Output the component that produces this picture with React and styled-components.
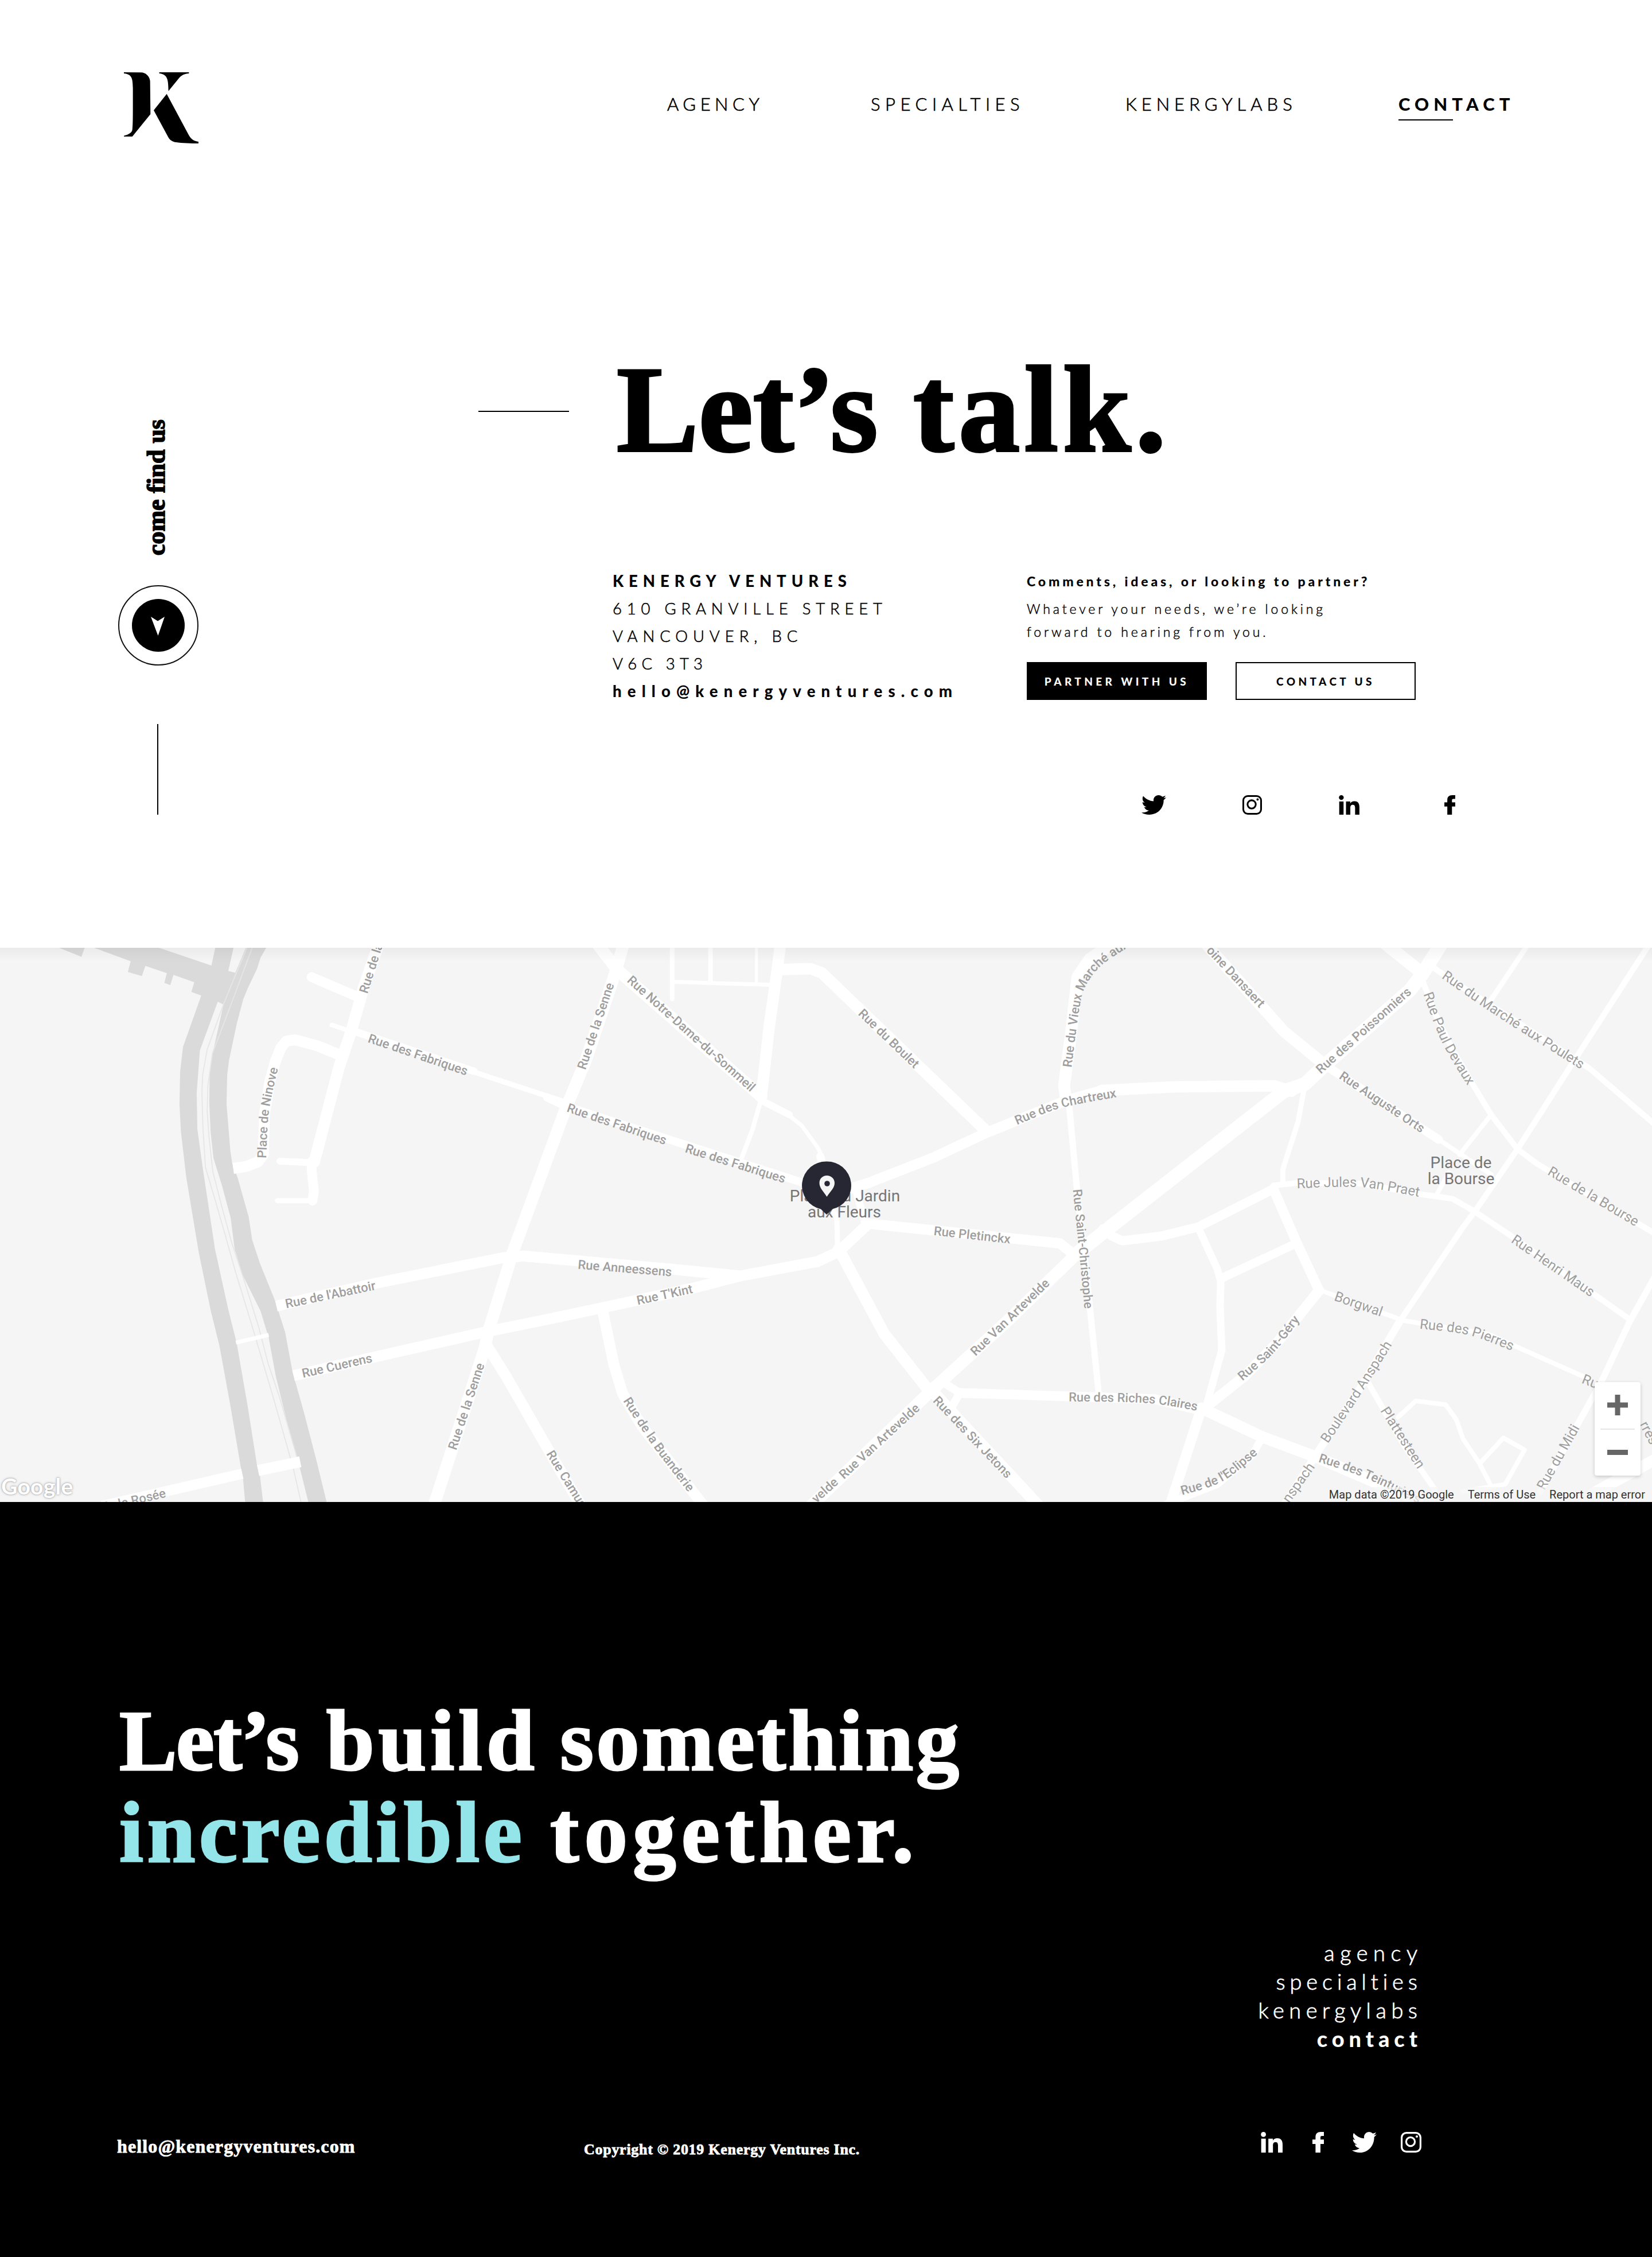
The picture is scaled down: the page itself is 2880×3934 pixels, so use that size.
import React from "react";
import styled, { createGlobalStyle } from "styled-components";
import { FaTwitter } from "react-icons/fa";

const SERIF = `"Liberation Serif", "Times New Roman", serif`;
const SANS = `Lato, "Open Sans", sans-serif`;
const MAP_FONT = `Roboto, "Liberation Sans", sans-serif`;

const GlobalStyle = createGlobalStyle`
  * { box-sizing: border-box; }
  body { margin: 0; background: #fff; color: #000; font-family: ${SANS}; }
  h1, h2, p { margin: 0; }
  a { color: inherit; text-decoration: none; }
`;

const Page = styled.div`
  width: 2880px;
  display: flex;
  flex-direction: column;
`;

/* ---------- header ---------- */

const Header = styled.header`
  height: 300px;
  padding: 126px 0 0 216px;
  display: flex;
  align-items: flex-start;
`;

const Logo = styled.svg`
  width: 130px;
  height: 124px;
  flex: none;
`;

const Nav = styled.nav`
  margin: 37px 0 0 817px;
  display: grid;
  grid-template-columns: 355px 444px 476px auto;
`;

const NavLink = styled.a`
  font-size: 31px;
  line-height: 36px;
  font-weight: ${(p) => (p.$active ? 900 : 300)};
  letter-spacing: ${(p) => p.$track}px;
  -webkit-text-stroke: ${(p) => (p.$active ? 0 : 0.7)}px currentColor;
  ${(p) =>
    p.$active &&
    `&::after {
      content: "";
      display: block;
      width: 95px;
      height: 2px;
      margin-top: 9px;
      background: #000;
    }`}
`;

/* ---------- hero ---------- */

const Hero = styled.main`
  height: 1352px;
  padding-left: 206px;
  display: flex;
  align-items: flex-start;
`;

const Side = styled.aside`
  width: 140px;
  padding-top: 431px;
  display: flex;
  flex-direction: column;
  align-items: center;
`;

const SideText = styled.span`
  margin-right: 6px;
  writing-mode: vertical-rl;
  transform: rotate(180deg);
  font: 700 44px/44px ${SERIF};
  -webkit-text-stroke: 1.6px #000;
`;

const Ring = styled.div`
  width: 140px;
  height: 140px;
  margin-top: 52px;
  border: 2px solid #111;
  border-radius: 50%;
  display: grid;
  place-items: center;
`;

const Disc = styled.div`
  width: 92px;
  height: 92px;
  border-radius: 50%;
  background: #000;
  display: grid;
  place-items: center;
`;

const Arrow = styled.svg`
  width: 24px;
  height: 33px;
  margin: 3px 2px 0 0;
`;

const SideLine = styled.div`
  width: 2px;
  height: 158px;
  margin: 102px 2px 0 0;
  background: #000;
`;

const Content = styled.section`
  margin-left: 488px;
  padding-top: 307px;
`;

const TitleRow = styled.div`
  display: flex;
  align-items: flex-start;
  gap: 83px;
`;

const Dash = styled.div`
  width: 158px;
  height: 2px;
  margin-top: 109px;
  background: #000;
`;

const Title = styled.h1`
  font: 700 214px/214px ${SERIF};
  -webkit-text-stroke: 4px #000;
  white-space: nowrap;
`;

const Word = styled.span`
  letter-spacing: ${(p) => p.$track}px;
  margin-right: ${(p) => p.$gap || 0}px;
  color: ${(p) => p.$color || "inherit"};
`;

const Info = styled.div`
  margin: 166px 0 0 234px;
  display: flex;
`;

const Address = styled.address`
  width: 722px;
  padding-top: 2px;
  font-style: normal;
  font-size: 27.5px;
  line-height: 48px;
  white-space: nowrap;
`;

const AddressLine = styled.div`
  font-weight: ${(p) => (p.$bold ? 900 : 300)};
  letter-spacing: ${(p) => p.$track}px;
  -webkit-text-stroke: ${(p) => (p.$bold ? 0 : 0.6)}px currentColor;
`;

const Pitch = styled.div`
  padding-top: 12px;
  font-size: 23px;
  white-space: nowrap;
`;

const PitchTitle = styled.p`
  line-height: 28px;
  font-weight: 900;
  letter-spacing: 4.85px;
`;

const PitchText = styled.p`
  margin-top: 14px;
  line-height: 40px;
  font-weight: 300;
  letter-spacing: 4.9px;
  -webkit-text-stroke: 0.5px currentColor;
`;

const Buttons = styled.div`
  margin-top: 33px;
  display: flex;
  gap: 50px;
`;

const Button = styled.button`
  width: 314px;
  height: 66px;
  padding: 1px 0 0;
  border: 2px solid #000;
  background: ${(p) => (p.$solid ? "#000" : "#fff")};
  color: ${(p) => (p.$solid ? "#fff" : "#000")};
  font: 900 19px/22px ${SANS};
  letter-spacing: 5.4px;
`;

const Socials = styled.div`
  display: grid;
  align-items: center;
  ${(p) =>
    p.$footer
      ? "height: 36px; grid-template-columns: 90px 69px 85px auto;"
      : "height: 34px; margin: 157px 0 0 1156px; grid-template-columns: 176px 168px 184px auto;"}
`;

const Twitter = styled(FaTwitter)`
  display: block;
  width: ${(p) => p.$w}px;
  height: ${(p) => p.$h}px;
`;

const Glyph = styled.svg`
  display: block;
  width: ${(p) => p.$w}px;
  height: ${(p) => p.$h}px;
`;

/* ---------- map ---------- */

const MapSection = styled.section`
  position: relative;
  height: 966px;
  background: #f5f5f5;
  overflow: hidden;
`;

const MapCanvas = styled.svg`
  display: block;
  width: 2880px;
  height: 966px;
`;

const Road = styled.path`
  fill: none;
  stroke: #fff;
  stroke-linejoin: round;
  stroke-linecap: ${(p) => (p.$flat ? "butt" : "round")};
`;

const StreetName = styled.text`
  font-family: ${MAP_FONT};
  font-size: ${(p) => (p.$minor ? 24 : 22)}px;
  font-weight: ${(p) => (p.$minor ? 400 : 500)};
  fill: #9e9e9e;
`;

const PlaceName = styled.text`
  font-family: ${MAP_FONT};
  font-size: 28px;
  fill: #757575;
  text-anchor: middle;
`;

const MapShade = styled.div`
  position: absolute;
  inset: 0 0 auto 0;
  height: 24px;
  background: linear-gradient(rgba(0, 0, 0, 0.045), rgba(0, 0, 0, 0));
`;

const Pin = styled.svg`
  position: absolute;
  left: 1398px;
  top: 372px;
  width: 86px;
  height: 94px;
`;

const MapLogo = styled.span`
  position: absolute;
  left: 2px;
  bottom: 6px;
  font: 700 39px/44px ${SANS};
  letter-spacing: 0.3px;
  color: #fff;
  text-shadow: 0 0 2px #999, 0 0 4px #b0b0b0;
`;

const Credits = styled.div`
  position: absolute;
  right: 0;
  bottom: 0;
  height: 26px;
  padding: 0 12px 0 10px;
  display: flex;
  gap: 24px;
  background: rgba(245, 245, 245, 0.7);
  color: #333;
  font: 400 20px/26px ${MAP_FONT};
`;

const Zoom = styled.div`
  position: absolute;
  left: 2780px;
  top: 757px;
  width: 80px;
  height: 163px;
  border-radius: 4px;
  background: #fff;
  box-shadow: 0 2px 6px rgba(0, 0, 0, 0.2);
  display: flex;
  flex-direction: column;
`;

const ZoomButton = styled.div`
  flex: 1;
  display: grid;
  place-items: center;
  & + & {
    margin: 0 10px;
    border-top: 2px solid #e6e6e6;
  }
`;

/* ---------- footer ---------- */

const Footer = styled.footer`
  height: 1316px;
  padding: 336px 0 0 204px;
  background: #000;
  color: #fff;
`;

const Headline = styled.h2`
  padding-left: 4px;
  font: 700 151px/160px ${SERIF};
  -webkit-text-stroke: 3px currentColor;
  white-space: nowrap;
`;

const FooterNav = styled.nav`
  width: 2267px;
  margin-top: 104px;
  display: flex;
  flex-direction: column;
  align-items: flex-end;
  font-size: 38px;
  line-height: 50px;
`;

const FooterLink = styled.a`
  font-weight: ${(p) => (p.$active ? 900 : 300)};
  letter-spacing: ${(p) => p.$track}px;
  margin-right: -${(p) => p.$track}px;
  -webkit-text-stroke: ${(p) => (p.$active ? 0 : 0.8)}px currentColor;
`;

const Bottom = styled.div`
  margin-top: 138px;
  display: grid;
  grid-template-columns: 814px 1180px auto;
  align-items: start;
  font-family: ${SERIF};
  font-weight: 700;
  line-height: 40px;
  -webkit-text-stroke: 0.8px currentColor;
`;

const Mail = styled.a`
  margin-top: 5px;
  font-size: 32px;
  letter-spacing: 1.13px;
`;

const Copyright = styled.span`
  margin-top: 11px;
  font-size: 26px;
  letter-spacing: 0.72px;
`;

/* ---------- icons ---------- */

const Bird = (p) => <Twitter viewBox="0 48 512 416" preserveAspectRatio="none" {...p} />;

const Instagram = (p) => (
  <Glyph viewBox="0 0 36 36" {...p}>
    <rect x="1.6" y="1.6" width="32.8" height="32.8" rx="8.2" fill="none" stroke="currentColor" strokeWidth="3.2" />
    <circle cx="17" cy="17" r="7.6" fill="none" stroke="currentColor" strokeWidth="3.2" />
    <circle cx="28" cy="8" r="2.1" fill="currentColor" />
  </Glyph>
);

const LinkedIn = (p) => (
  <Glyph viewBox="0 0 38 36" {...p}>
    <circle cx="4.6" cy="4.4" r="4.4" fill="currentColor" />
    <rect x="0.7" y="11.7" width="8" height="24.3" fill="currentColor" />
    <path
      d="M13.2 11.7H21V15C22.4 12.6 25.3 11 28.7 11C36 11 38 15.9 38 22.3V36H30V24C30 20.8 29.4 17.8 25.8 17.8C22 17.8 21.2 20.7 21.2 23.8V36H13.2Z"
      fill="currentColor"
    />
  </Glyph>
);

const Facebook = (p) => (
  <Glyph viewBox="0 0 20 36" {...p}>
    <path
      d="M20 0H14.5C8.6 0 5.4 3.2 5.4 8.6V13.2H0V21H5.4V36H14V21H20V13.2H14V9.600C14 7.800 15 7 16.500 7H20Z"
      fill="currentColor"
    />
  </Glyph>
);

/* ---------- map data ---------- */

/* Three tiles side by side, each on a 1568 unit grid, projected to the map's pixels. */
const project = (tile, [x, y]) => [tile * 960 + x * 0.61224, y * 0.63138 - 12];
const parse = (tile, s) => s.split(" ").map((q) => project(tile, q.split(",").map(Number)));
const line = (pts) => "M" + pts.map((q) => q.map((v) => v.toFixed(1)).join(" ")).join("L");

const WATER = [
  "168,19 232,44 241,19",
  "268,19 372,56 364,86 404,97 414,69 475,89 468,116 485,122 494,94 553,114 545,141 573,151 521,293 513,360 511,450 515,525 530,650 547,750 566,860 600,1020 625,1118 656,1283 685,1449 692,1484 698,1549 749,1549 740,1475 732,1449 705,1283 674,1110 650,1018 612,850 577,625 562,520 560,420 569,303 620,168 637,176 670,88 650,83 665,19 613,19 602,68 453,19",
  "700,19 670,88 637,173 608,300 597,360 596,450 600,530 608,600 632,675 657,765 668,850 690,920 742,1022 765,1095 785,1200 815,1320 850,1440 878,1549 930,1549 900,1430 865,1300 833,1190 812,1080 792,1020 784,995 740,890 718,825 708,762 677,655 661,613 656,580 645,450 647,370 652,330 675,225 693,160 706,130 732,77 742,46 758,19",
];

const RAILS = [
  "703,19 637,173 590,300 577,370 575,420 578,520 585,625 614,720 643,818 671,915 719,1067 778,1260 835,1455 857,1549",
  "718,19 660,170 605,310 592,400 590,470 595,540 606,637 632,735 660,834 693,930 737,1067 763,1165 796,1260 850,1440",
];

/* [tile, width, points, flat ends] */
const ROADS = [
  [0, 19, "664,628 700,623 735,610 750,590 753,480 768,390 785,330 800,295 815,277 840,273 905,290 975,318", true],
  [0, 20, "1078,10 1035,130 1000,250 965,350 895,610"],
  [0, 17, "887,610 888,640 894,690 890,717"],
  [0, 9, "888,717 790,717"],
  [0, 12, "797,608 885,612"],
  [0, 17, "887,100 1020,155"],
  [0, 8, "945,232 1015,255"],
  [0, 13, "1010,250 1350,360"],
  [0, 9, "1350,362 1400,378 1620,448"],
  [0, 21, "1775,10 1753,85 1668,330 1608,470 1460,860 1390,1080"],
  [0, 21, "1390,1080 1380,1125 1235,1560"],
  [0, 19, "787,1008 1070,945 1430,875 1490,870 1900,905 2108,925", true],
  [0, 19, "836,1200 1130,1135 1390,1078 1568,1043 1718,1012 1968,960 2108,925 2328,885 2388,858 2468,785", true],
  [0, 19, "1388,1120 1440,1200 1600,1470 1655,1560"],
  [0, 18, "290,1560 690,1471", true],
  [0, 19, "735,1462 855,1438", true],
  [0, 7, "672,1109 765,1088", true],
  [1, 21, "130,5 190,80 600,430"],
  [1, 12, "600,440 680,480"],
  [1, 7, "670,475 715,510 760,570 775,600"],
  [1, 14, "768,595 790,690"],
  [1, 20, "654,10 645,80 622,240 600,430"],
  [1, 8, "600,435 575,520 543,602"],
  [1, 8, "346,10 346,160"],
  [1, 8, "455,10 455,110"],
  [1, 5, "586,10 586,118"],
  [1, 7, "346,113 510,118 630,121"],
  [1, 20, "650,79 740,77 772,88 1235,520"],
  [1, 14, "-10,432 40,455 540,612 720,668 800,690"],
  [1, 18, "850,685 905,668 1090,598 1240,530 1470,440 1568,413"],
  [1, 20, "1568,413 1770,403 2060,400 2110,415"],
  [1, 9, "790,700 815,770 817,850"],
  [1, 13, "870,690 895,780"],
  [1, 18, "900,780 1450,835 1485,862"],
  [1, 20, "820,850 950,1085 1080,1245"],
  [1, 20, "1080,1235 1160,1320 1395,1565"],
  [1, 17, "1165,1248 1560,1260 1720,1265 1855,1297"],
  [1, 14, "1120,1220 1165,1248 1140,1290"],
  [1, 21, "1500,862 1300,1050 1080,1245 730,1570"],
  [1, 24, "1500,862 1580,800 2088,415 2148,395 2208,340 2448,135 2483,90 2535,10"],
  [1, 21, "1620,-5 1535,50 1500,100 1480,270 1462,400 1467,435"],
  [1, 11, "1475,440 1500,700 1530,960 1560,1245"],
  [1, 19, "148,1020 180,1170 205,1250 260,1340 440,1565"],
  [2, 20, "290,0 520,250 640,345"],
  [2, 15, "640,345 960,548"],
  [2, 8, "960,548 1110,645"],
  [2, 22, "805,5 915,90"],
  [2, 10, "940,70 1000,110 1390,352 1580,510"],
  [2, 10, "915,110 950,200 1000,300 1060,400 1110,480 1185,575 1240,615 1580,810"],
  [2, 9, "1215,10 1108,165"],
  [2, 10, "1560,10 1340,340 1185,575 1065,745 1030,790 850,1050"],
  [2, 13, "850,1050 740,1230 610,1420 515,1565"],
  [2, 8, "1110,480 1020,590"],
  [2, 8, "990,640 955,700"],
  [2, 9, "577,410 560,500 517,630 517,668"],
  [2, 10, "490,675 560,668 740,670 900,698 1000,712 1060,745 1160,810 1505,1045"],
  [2, 16, "490,685 275,790 170,815 60,828 30,815 5,795"],
  [2, 17, "490,685 555,830 620,965"],
  [2, 15, "555,835 345,930"],
  [2, 13, "275,790 330,905 340,940 338,1010 343,1130 320,1210 300,1280"],
  [2, 8, "625,965 860,1048 1100,1085 1390,1210"],
  [2, 18, "620,965 500,1110 410,1200 300,1285"],
  [2, 18, "285,1290 195,1560"],
  [2, 20, "285,1290 460,1370 620,1428 900,1545"],
  [2, 13, "455,1375 430,1420 330,1500 185,1555"],
  [2, 10, "760,1220 860,1390 950,1515"],
  [2, 8, "845,1315 895,1270 980,1280 1010,1320 1030,1375 1075,1440 1110,1505"],
  [2, 8, "1080,1440 1145,1372 1205,1405 1150,1500 1030,1520"],
  [2, 11, "1580,920 1505,1050 1425,1215 1250,1520"],
  [2, 20, "1400,1525 1580,1430"],
];

/* [tile, name, baseline points, minor street] */
const STREETS = [
  [0, "Rue des Fabriques", "1046,279 1325,371"],
  [0, "Rue de la", "1046,147 1090,12"],
  [0, "Place de Ninove", "758,600 766,470 792,350"],
  [0, "Rue de l'Abattoir", "815,1014 1073,962"],
  [0, "Rue Cuerens", "863,1206 1059,1163"],
  [0, "Rue de la Senne", "1299,1407 1380,1170"],
  [0, "de la Rosée", "293,1577 475,1535"],
  [1, "Rue de la Senne", "99,357 181,120"],
  [1, "Rue Notre-Dame-du-Sommeil", "216,112 566,415"],
  [1, "Rue des Fabriques", "44,471 325,563"],
  [1, "Rue des Fabriques", "381,583 662,668"],
  [1, "Rue du Boulet", "874,203 1035,353"],
  [1, "Rue des Chartreux", "1328,508 1450,462 1606,432"],
  [1, "Rue du Vieux Marché aux", "1483,350 1505,190 1523,125 1568,68 1640,20"],
  [1, "Rue Pletinckx", "1090,812 1305,835"],
  [1, "Rue Saint-Christophe", "1487,687 1504,850 1520,1015"],
  [1, "Rue Anneessens", "77,905 345,926"],
  [1, "Rue T'Kint", "248,1005 405,972"],
  [1, "Rue Van Artevelde", "1210,1147 1420,950"],
  [1, "Rue Van Artevelde", "835,1487 1048,1297"],
  [1, "velde", "757,1553 818,1500"],
  [1, "Rue de la Buanderie", "206,1270 290,1393 390,1520"],
  [1, "Rue des Six Jetons", "1087,1271 1295,1482"],
  [1, "Rue Camusel", "-13,1416 85,1570"],
  [1, "Rue des Riches Claires", "1475,1271 1700,1276 1838,1297"],
  [2, "oine Dansaert", "298,28 452,188"],
  [2, "Rue des Poissonniers", "625,368 880,148"],
  [2, "Rue Auguste Orts", "675,379 905,527"],
  [2, "Rue du Marché aux Poulets", "968,102 1130,210 1366,355", true],
  [2, "Rue Paul Devaux", "917,147 970,280 1045,403", true],
  [2, "Rue de la Bourse", "1269,644 1518,787", true],
  [2, "Rue Jules Van Praet", "557,683 740,680 903,706", true],
  [2, "Rue Henri Maus", "1165,831 1388,980", true],
  [2, "Borgwal", "661,992 795,1037", true],
  [2, "Rue des Pierres", "906,1070 1045,1088 1165,1130", true],
  [2, "Rue Saint-Géry", "402,1215 490,1138 562,1050"],
  [2, "Boulevard Anspach", "645,1388 740,1250 830,1112", true],
  [2, "Plattesteen", "794,1297 900,1458", true],
  [2, "Rue de l'Eclipse", "230,1530 345,1492 447,1415"],
  [2, "Rue des Teinturiers", "617,1438 750,1482 895,1550"],
  [2, "nspach", "535,1553 596,1470", true],
  [2, "Rue du Midi", "1262,1518 1362,1345", true],
  [2, "Ru", "1366,1220 1408,1236", true],
  [2, "rres", "1532,1335 1562,1390", true],
];

/* Smooth baseline through the given points, run on a little so the last letters always fit. */
const baseline = (pts) => {
  const n = pts.length - 1;
  const at = (i) => pts[Math.max(0, Math.min(n, i))];
  let d = `M${at(0).join(" ")}`;
  for (let i = 0; i < n; i++) {
    const a = at(i).map((v, k) => v + (at(i + 1)[k] - at(i - 1)[k]) / 6);
    const b = at(i + 1).map((v, k) => v - (at(i + 2)[k] - at(i)[k]) / 6);
    d += `C${a.join(" ")} ${b.join(" ")} ${at(i + 1).join(" ")}`;
  }
  const [p, q] = [at(n - 1), at(n)];
  const len = Math.hypot(q[0] - p[0], q[1] - p[1]);
  return d + `L${q.map((v, k) => v + ((v - p[k]) / len) * 30).join(" ")}`;
};

const StreetMap = () => (
  <MapCanvas viewBox="0 0 2880 966">
    {WATER.map((s, i) => (
      <path key={i} d={line(parse(0, s)) + "Z"} fill="#dadada" />
    ))}
    {RAILS.map((s, i) => (
      <path key={i} d={line(parse(0, s))} fill="none" stroke="#e6e6e6" strokeWidth="1.8" />
    ))}
    {ROADS.map(([t, w, s, flat], i) => (
      <Road key={i} d={line(parse(t, s))} strokeWidth={w} $flat={flat} />
    ))}
    {STREETS.map(([t, name, s, minor], i) => (
      <React.Fragment key={i}>
        <path id={`street-${i}`} d={baseline(parse(t, s))} fill="none" />
        <StreetName $minor={minor}>
          <textPath href={`#street-${i}`}>{name}</textPath>
        </StreetName>
      </React.Fragment>
    ))}
    <PlaceName x="1473" y="442">Place du Jardin</PlaceName>
    <PlaceName x="1472" y="470">aux Fleurs</PlaceName>
    <PlaceName x="2547" y="384">Place de</PlaceName>
    <PlaceName x="2547" y="412">la Bourse</PlaceName>
  </MapCanvas>
);

export default function App() {
  return (
    <Page>
      <GlobalStyle />
      <Header>
        <Logo viewBox="108 108 390 372" preserveAspectRatio="none">
          <path d="M108 108L198 109C226 110 243 132 245 154L247 327L152 444H108V440C132 434 150 424 152 408C155 380 155 340 155 280V190C154 140 150 118 108 114Z" />
          <path d="M293 108H448V114C424 116 410 122 396 139L341 206C340 150 338 118 293 114Z" />
          <path d="M332 221L447 436C460 460 476 468 498 471V480C460 480 410 479 382 474C362 471 350 463 341 449L264 307Z" />
        </Logo>
        <Nav>
          <NavLink href="#" $track={7.5}>AGENCY</NavLink>
          <NavLink href="#" $track={8.5}>SPECIALTIES</NavLink>
          <NavLink href="#" $track={8}>KENERGYLABS</NavLink>
          <NavLink href="#" $track={8.1} $active>CONTACT</NavLink>
        </Nav>
      </Header>

      <Hero>
        <Side>
          <SideText>come find us</SideText>
          <Ring>
            <Disc>
              <Arrow viewBox="0 0 24 33">
                <path d="M0 0L12 7.5L24 0L12.5 33Z" fill="#fff" />
              </Arrow>
            </Disc>
          </Ring>
          <SideLine />
        </Side>
        <Content>
          <TitleRow>
            <Dash />
            <Title>
              <Word $track={0} $gap={8}>Let’s</Word> <Word $track={7.6}>talk.</Word>
            </Title>
          </TitleRow>
          <Info>
            <Address>
              <AddressLine $bold $track={8.95}>KENERGY VENTURES</AddressLine>
              <AddressLine $track={8.8}>610 GRANVILLE STREET</AddressLine>
              <AddressLine $track={8.9}>VANCOUVER, BC</AddressLine>
              <AddressLine $track={8.2}>V6C 3T3</AddressLine>
              <AddressLine $bold $track={10.15}>hello@kenergyventures.com</AddressLine>
            </Address>
            <Pitch>
              <PitchTitle>Comments, ideas, or looking to partner?</PitchTitle>
              <PitchText>
                Whatever your needs, we’re looking
                <br />
                forward to hearing from you.
              </PitchText>
              <Buttons>
                <Button $solid>PARTNER WITH US</Button>
                <Button>CONTACT US</Button>
              </Buttons>
            </Pitch>
          </Info>
          <Socials>
            <Bird $w={43} $h={34} />
            <Instagram $w={34} $h={34} />
            <LinkedIn $w={36} $h={34} />
            <Facebook $w={19} $h={34} />
          </Socials>
        </Content>
      </Hero>

      <MapSection>
        <StreetMap />
        <MapShade />
        <Pin viewBox="0 0 86 94">
          <path d="M43 0.5A42 42 0 0 0 33 83.5L43 93L53 83.5A42 42 0 0 0 43 0.5Z" fill="#272733" />
          <path d="M43.5 25C36 25 30.5 30.5 30.5 38C30.5 47 38 53 43.5 62C49 53 57 47 57 38C57 30.5 51 25 43.5 25Z" fill="#f5f5f5" />
          <circle cx="44" cy="39" r="4.8" fill="#272733" />
        </Pin>
        <MapLogo>Google</MapLogo>
        <Credits>
          <span>Map data ©2019 Google</span>
          <span>Terms of Use</span>
          <span>Report a map error</span>
        </Credits>
        <Zoom>
          <ZoomButton>
            <Glyph $w={36} $h={36} viewBox="0 0 36 36">
              <path d="M0 18H36M18 0V36" stroke="#666" strokeWidth="9" />
            </Glyph>
          </ZoomButton>
          <ZoomButton>
            <Glyph $w={36} $h={9} viewBox="0 0 36 9">
              <path d="M0 4.5H36" stroke="#666" strokeWidth="9" />
            </Glyph>
          </ZoomButton>
        </Zoom>
      </MapSection>

      <Footer>
        <Headline>
          <Word $track={-1.9} $gap={11}>Let’s</Word> <Word $track={6.8}>build</Word> <Word $track={4.1}>something</Word>
          <br />
          <Word $track={6.5} $gap={5} $color="#94e5e9">incredible</Word> <Word $track={9.2}>together.</Word>
        </Headline>
        <FooterNav>
          <FooterLink href="#" $track={9.5}>agency</FooterLink>
          <FooterLink href="#" $track={7.9}>specialties</FooterLink>
          <FooterLink href="#" $track={8.5}>kenergylabs</FooterLink>
          <FooterLink href="#" $track={7.9} $active>contact</FooterLink>
        </FooterNav>
        <Bottom>
          <Mail href="#">hello@kenergyventures.com</Mail>
          <Copyright>Copyright © 2019 Kenergy Ventures Inc.</Copyright>
          <Socials $footer>
            <LinkedIn $w={38} $h={36} />
            <Facebook $w={20} $h={36} />
            <Bird $w={43} $h={36} />
            <Instagram $w={36} $h={36} />
          </Socials>
        </Bottom>
      </Footer>
    </Page>
  );
}
